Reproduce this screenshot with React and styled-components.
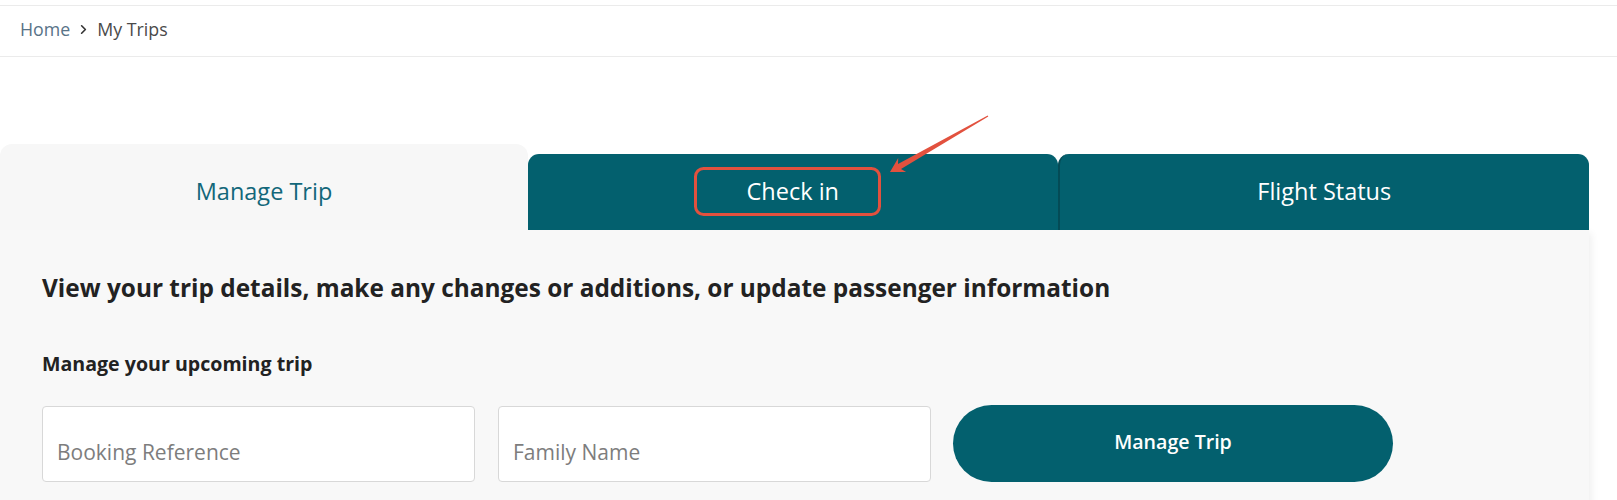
import React from 'react';
import styled, { createGlobalStyle, css } from 'styled-components';
import { ChevronRight } from 'lucide-react';

const teal = '#03606e';

const GlobalStyle = createGlobalStyle`
  html, body {
    margin: 0;
    padding: 0;
    background: #ffffff;
  }
  body {
    font-family: "Open Sans", "Noto Sans", sans-serif;
    color: #222;
  }
  * {
    box-sizing: border-box;
  }
`;

const Page = styled.div`
  position: relative;
  width: 1617px;
  height: 500px;
  overflow: hidden;
`;

const Breadcrumb = styled.nav`
  display: flex;
  align-items: center;
  gap: 6px;
  margin-top: 5px;
  height: 52px;
  padding: 0 0 4px 20px;
  border-top: 1px solid #ebebeb;
  border-bottom: 1px solid #ebebeb;
  font-size: 17.8px;
`;

const Crumb = styled.span`
  color: ${({ current }) => (current ? '#4a4a4a' : '#587387')};
`;

const Card = styled.section`
  width: 1589px;
  margin-top: 87px;
`;

const TabRow = styled.div`
  display: flex;
  align-items: flex-end;
  height: 86px;
`;

const Tab = styled.div`
  flex: 1;
  display: flex;
  align-items: center;
  justify-content: center;
  height: 76px;
  padding-bottom: 3px;
  background: ${teal};
  color: #fff;
  font-size: 23.5px;
  border-radius: 11px 11px 0 0;
  ${({ divider }) =>
    divider &&
    css`
      border-left: 2px solid #044b56;
    `}
  ${({ active }) =>
    active &&
    css`
      flex: 0 0 528px;
      height: 86px;
      padding: 10px 0 3px;
      background: #f7f7f7;
      color: #12677a;
      border-radius: 12px 12px 0 0;
    `}
`;

const Panel = styled.div`
  background: #f8f8f8;
  height: 300px;
  padding: 42px 0 0 42px;
  box-shadow: 5px 0 8px -3px rgba(0, 0, 0, 0.07);
`;

const Heading = styled.h2`
  margin: 0;
  font-size: 24.4px;
  line-height: 32px;
  font-weight: 700;
  color: #222;
`;

const SubHeading = styled.h3`
  margin: 47px 0 0;
  font-size: 19.6px;
  line-height: 26px;
  font-weight: 700;
  color: #222;
`;

const FormRow = styled.div`
  display: flex;
  align-items: center;
  margin-top: 28px;
`;

const Field = styled.input`
  width: 433px;
  height: 76px;
  margin-right: 23px;
  padding: 17px 14px 0;
  border: 1px solid #d8d8d8;
  border-radius: 4px;
  background: #fff;
  font-family: inherit;
  font-size: 21px;
  color: #333;
  outline: none;
  &::placeholder {
    color: #7d7d7d;
  }
`;

const SubmitButton = styled.button`
  width: 440px;
  height: 77px;
  margin-left: -1px;
  padding-bottom: 5px;
  border: none;
  border-radius: 40px;
  background: ${teal};
  color: #fff;
  font-family: inherit;
  font-size: 19.6px;
  font-weight: 600;
`;

const Annotation = styled.svg`
  position: absolute;
  top: 0;
  left: 0;
  pointer-events: none;
`;

function App() {
  return (
    <Page>
      <GlobalStyle />
      <Breadcrumb>
        <Crumb>Home</Crumb>
        <ChevronRight size={15} strokeWidth={2.6} color="#333" />
        <Crumb current>My Trips</Crumb>
      </Breadcrumb>

      <Card>
        <TabRow>
          <Tab active>Manage Trip</Tab>
          <Tab>Check in</Tab>
          <Tab divider>Flight Status</Tab>
        </TabRow>
        <Panel>
          <Heading>
            View your trip details, make any changes or additions, or update passenger information
          </Heading>
          <SubHeading>Manage your upcoming trip</SubHeading>
          <FormRow>
            <Field placeholder="Booking Reference" />
            <Field placeholder="Family Name" />
            <SubmitButton>Manage Trip</SubmitButton>
          </FormRow>
        </Panel>
      </Card>

      <Annotation width="1617" height="500" viewBox="0 0 1617 500">
        <rect x="695.5" y="168.5" width="184" height="46" rx="8" fill="none" stroke="#e2513e" strokeWidth="3" />
        <polygon
          points="890,172 906.1,172 901,169.1 988.3,116.4 987.7,115.6 898,163.9 898.2,158.1"
          fill="#e2513e"
        />
      </Annotation>
    </Page>
  );
}

export default App;
